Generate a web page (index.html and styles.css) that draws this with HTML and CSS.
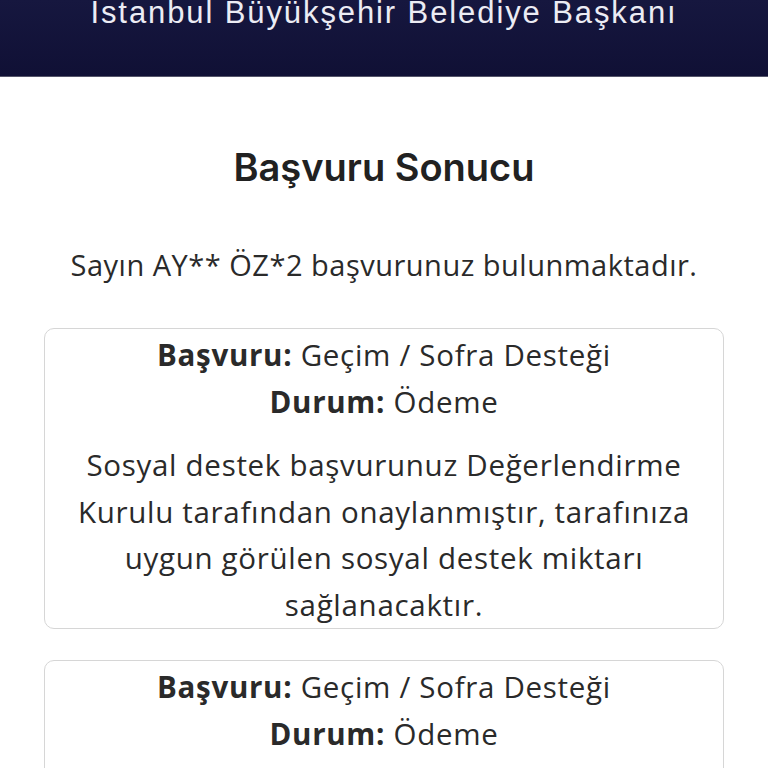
FILE: index.html
```html
<!DOCTYPE html>
<html lang="tr">
<head>
<meta charset="utf-8">
<link rel="stylesheet" href="styles.css">
</head>
<body>
<header class="top">
  <div class="top-title">İstanbul Büyükşehir Belediye Başkanı</div>
</header>
<main class="content">
  <h1 class="title">Başvuru Sonucu</h1>
  <p class="intro">Sayın AY** ÖZ*2 başvurunuz bulunmaktadır.</p>
  <section class="card">
    <div class="line"><b>Başvuru:</b> Geçim / Sofra Desteği</div>
    <div class="line"><b>Durum:</b> Ödeme</div>
    <p class="desc">Sosyal destek başvurunuz Değerlendirme Kurulu tarafından onaylanmıştır, tarafınıza uygun görülen sosyal destek miktarı sağlanacaktır.</p>
  </section>
  <section class="card">
    <div class="line"><b>Başvuru:</b> Geçim / Sofra Desteği</div>
    <div class="line"><b>Durum:</b> Ödeme</div>
    <p class="desc">Sosyal destek başvurunuz Değerlendirme Kurulu tarafından onaylanmıştır, tarafınıza uygun görülen sosyal destek miktarı sağlanacaktır.</p>
  </section>
</main>
</body>
</html>
```

FILE: styles.css
```css
html, body {
  margin: 0;
  padding: 0;
  background: #ffffff;
  overflow: hidden;
}
body {
  font-family: "Open Sans", "Noto Sans", sans-serif;
  color: #2a2a2a;
}
.top {
  height: 76px;
  background: linear-gradient(180deg, #16173f 0%, #101035 100%);
  border-bottom: 1px solid #55556a;
  display: flex;
  justify-content: center;
  align-items: flex-start;
  overflow: hidden;
}
.top-title {
  font-family: "Liberation Sans", Arial, sans-serif;
  font-size: 31px;
  line-height: 1;
  color: #ececf4;
  margin-top: -3px;
  letter-spacing: 1.9px;
}
.content {
  padding: 0 44px;
  display: flex;
  flex-direction: column;
  align-items: stretch;
}
.title {
  font-family: Inter, sans-serif;
  font-weight: 600;
  font-size: 38px;
  text-align: center;
  margin: 66px 0 0;
  line-height: 48px;
  color: #212121;
}
.intro {
  text-align: center;
  font-size: 29px;
  letter-spacing: 0.5px;
  margin: 54px 0 0;
  line-height: 40px;
}
.card {
  border: 1px solid #d6d6d6;
  border-radius: 10px;
  margin-top: 43px;
  padding: 3px 20px 0;
  text-align: center;
  font-size: 29.5px;
  letter-spacing: 0.7px;
  line-height: 46.5px;
}
.card + .card {
  margin-top: 31px;
}
.line b {
  font-weight: 700;
}
.desc {
  margin: 17px 0 0;
}
```
